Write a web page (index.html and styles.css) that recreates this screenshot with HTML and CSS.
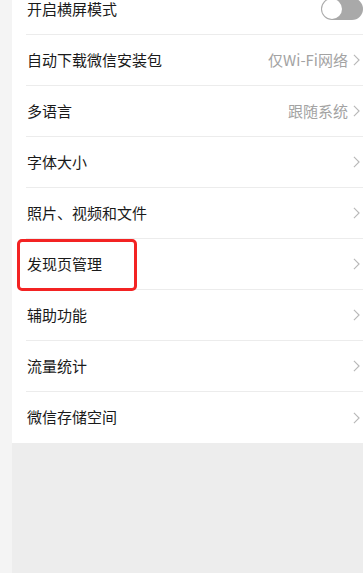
FILE: index.html
```html
<!DOCTYPE html>
<html lang="zh-CN">
<head>
  <meta charset="UTF-8">
  <meta name="viewport" content="width=device-width, initial-scale=1.0">
  <title>通用</title>
  <link rel="stylesheet" href="styles.css">
</head>
<body>
  <div class="page">
    <div class="strip"></div>
    <div class="main">
      <ul class="list">
        <li class="row">
          <div class="cell">
            <span class="label">开启横屏模式</span>
            <span class="switch"><span class="knob"></span></span>
          </div>
        </li>
        <li class="row">
          <div class="cell">
            <span class="label">自动下载微信安装包</span>
            <span class="value">仅Wi-Fi网络</span>
            <svg class="arrow" viewBox="0 0 8 14"><polyline points="1,1 7,7 1,13"/></svg>
          </div>
        </li>
        <li class="row">
          <div class="cell">
            <span class="label">多语言</span>
            <span class="value">跟随系统</span>
            <svg class="arrow" viewBox="0 0 8 14"><polyline points="1,1 7,7 1,13"/></svg>
          </div>
        </li>
        <li class="row">
          <div class="cell">
            <span class="label">字体大小</span>
            <svg class="arrow" viewBox="0 0 8 14"><polyline points="1,1 7,7 1,13"/></svg>
          </div>
        </li>
        <li class="row">
          <div class="cell">
            <span class="label">照片、视频和文件</span>
            <svg class="arrow" viewBox="0 0 8 14"><polyline points="1,1 7,7 1,13"/></svg>
          </div>
        </li>
        <li class="row marked">
          <div class="cell">
            <span class="label">发现页管理</span>
            <svg class="arrow" viewBox="0 0 8 14"><polyline points="1,1 7,7 1,13"/></svg>
          </div>
          <div class="highlight"></div>
        </li>
        <li class="row">
          <div class="cell">
            <span class="label">辅助功能</span>
            <svg class="arrow" viewBox="0 0 8 14"><polyline points="1,1 7,7 1,13"/></svg>
          </div>
        </li>
        <li class="row">
          <div class="cell">
            <span class="label">流量统计</span>
            <svg class="arrow" viewBox="0 0 8 14"><polyline points="1,1 7,7 1,13"/></svg>
          </div>
        </li>
        <li class="row">
          <div class="cell">
            <span class="label">微信存储空间</span>
            <svg class="arrow" viewBox="0 0 8 14"><polyline points="1,1 7,7 1,13"/></svg>
          </div>
        </li>
      </ul>
    </div>
  </div>
</body>
</html>
```

FILE: styles.css
```css
html, body {
  margin: 0;
  height: 100%;
  overflow: hidden;
}
body {
  background: #ededed;
  font-family: "Noto Sans CJK SC", "Noto Sans", sans-serif;
  color: #1a1a1a;
}
.page {
  display: grid;
  grid-template-columns: 12px 1fr;
  height: 573px;
}
.strip {
  background: #f4f4f4;
}
.main {
  background: #ededed;
  overflow: hidden;
}
.list {
  list-style: none;
  margin: -16px 0 0 0;
  padding: 0;
  background: #fff;
}
.row {
  position: relative;
  padding-left: 14px;
}
.cell {
  display: flex;
  align-items: center;
  height: 50px;
  border-bottom: 1px solid #ececec;
  padding-right: 3px;
}
.row:last-child .cell {
  border-bottom: none;
  height: 51px;
}
.label {
  flex: 1;
  font-size: 15px;
  padding-left: 1px;
  padding-bottom: 2px;
}
.value {
  font-size: 15px;
  color: #a3a3a3;
  margin-right: 5px;
  padding-bottom: 2px;
}
.arrow {
  width: 7px;
  height: 12px;
  fill: none;
  stroke: #b8b8b8;
  stroke-width: 1.3;
}
.switch {
  position: relative;
  width: 42px;
  height: 22px;
  border-radius: 11px;
  background: #a9a9a9;
  margin-right: -3px;
}
.knob {
  position: absolute;
  left: 1px;
  top: 1px;
  width: 20px;
  height: 20px;
  border-radius: 50%;
  background: #fff;
}
.highlight {
  position: absolute;
  left: 5px;
  top: 0;
  width: 114px;
  height: 46px;
  border: 3px solid #f32323;
  border-radius: 5px;
}
```
